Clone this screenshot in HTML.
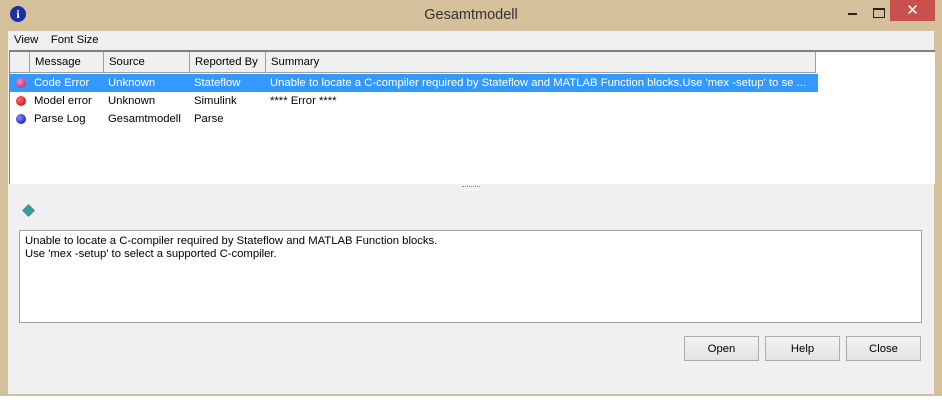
<!DOCTYPE html><html><head><style>
body{margin:0;width:942px;height:402px;background:#fff;font-family:"Liberation Sans",sans-serif;font-size:11.3px;position:relative;overflow:hidden}
.a{position:absolute}
.win{left:0;top:0;width:942px;height:396px;background:#d4c09a}
.cl{left:8px;top:31px;width:926px;height:363px;background:#f0f0f0}
.hd div{position:absolute;top:0;height:21px;line-height:21px;border-right:1px solid #a0a0a0;border-bottom:1px solid #a0a0a0;padding-left:5px;box-sizing:border-box;background:#f0f0f0;color:#000}
.row{position:absolute;height:18px;line-height:18px;left:0;width:808px}
.row span{position:absolute}
.dot{width:10px;height:10px;border-radius:50%;top:4px;left:6px}
.btn{position:absolute;top:336px;width:75px;height:25px;border:1px solid #acacac;background:linear-gradient(#f2f2f2,#e3e3e3);text-align:center;line-height:24px;font-size:11.3px;box-sizing:border-box}
</style></head><body>
<div class="a win"></div>
<div class="a" style="left:10px;top:6px;width:16px;height:16px;border-radius:50%;background:#1b2fa8;color:#fff;font:bold 12px 'Liberation Serif';text-align:center;line-height:16px">i</div>
<div class="a" style="left:0;top:7px;width:942px;text-align:center;font-size:14.5px;color:#333">Gesamtmodell</div>
<div class="a" style="left:848px;top:13px;width:9px;height:2px;background:#222"></div>
<div class="a" style="left:873px;top:8px;width:10px;height:7px;border:1px solid #222;border-top-width:2px"></div>
<div class="a" style="left:890px;top:0;width:45px;height:21px;background:#c9514d;color:#fff;text-align:center;font-size:15px;line-height:21px">✕</div>
<div class="a cl"></div>
<div class="a" style="left:14px;top:34px">View&nbsp;&nbsp;&nbsp;&nbsp;Font Size</div>
<div class="a" style="left:9px;top:50px;width:925px;height:132px;background:#fff;border-top:2px solid #808080;border-left:1px solid #808080"></div>
<div class="a hd" style="left:10px;top:52px;width:806px;height:21px">
<div style="left:0;width:20px"></div>
<div style="left:20px;width:74px">Message</div>
<div style="left:94px;width:86px">Source</div>
<div style="left:180px;width:76px">Reported By</div>
<div style="left:256px;width:550px">Summary</div>
</div>
<div class="a" style="left:10px;top:74px;width:808px;height:60px">
<div class="row" style="top:0;background:#3399ff;color:#fff"><span class="dot" style="background:radial-gradient(circle at 35% 35%,#f8c,#b02050)"></span><span style="left:24px">Code Error</span><span style="left:98px">Unknown</span><span style="left:184px">Stateflow</span><span style="left:260px">Unable to locate a C-compiler required by Stateflow and MATLAB Function blocks.Use 'mex -setup' to se ...</span></div>
<div class="row" style="top:18px"><span class="dot" style="background:radial-gradient(circle at 35% 35%,#f66,#c00)"></span><span style="left:24px">Model error</span><span style="left:98px">Unknown</span><span style="left:184px">Simulink</span><span style="left:260px">**** Error ****</span></div>
<div class="row" style="top:36px"><span class="dot" style="background:radial-gradient(circle at 35% 35%,#88f,#00b)"></span><span style="left:24px">Parse Log</span><span style="left:98px">Gesamtmodell</span><span style="left:184px">Parse</span></div>
</div>
<div class="a" style="left:462px;top:186px;width:18px;height:1px;border-top:1px dotted #6a8ec0"></div>
<div class="a" style="left:24px;top:206px;width:7px;height:7px;background:#2aa4a4;transform:rotate(45deg);border:1px solid #777"></div>
<div class="a" style="left:19px;top:230px;width:903px;height:93px;background:#fff;border:1px solid #a0a0a0;box-sizing:border-box;padding:4px 5px;line-height:13px">Unable to locate a C-compiler required by Stateflow and MATLAB Function blocks.<br>Use 'mex -setup' to select a supported C-compiler.</div>
<div class="btn" style="left:684px">Open</div>
<div class="btn" style="left:765px">Help</div>
<div class="btn" style="left:846px">Close</div>
</body></html>
